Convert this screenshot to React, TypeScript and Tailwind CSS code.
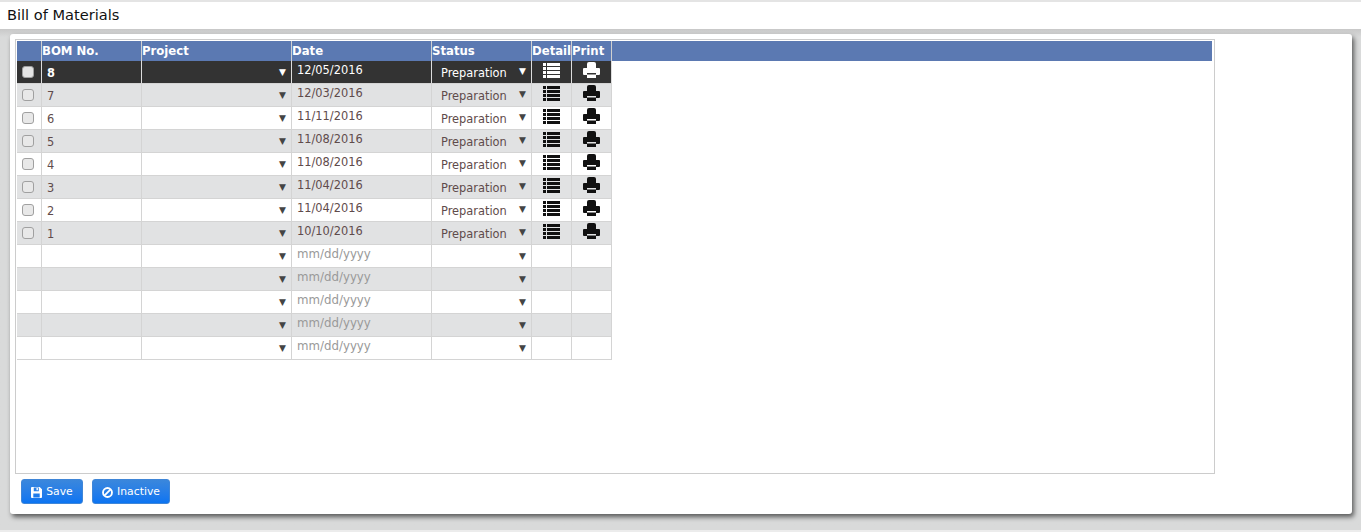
import React from 'react';

const boms = [
  { no: '8', date: '12/05/2016' },
  { no: '7', date: '12/03/2016' },
  { no: '6', date: '11/11/2016' },
  { no: '5', date: '11/08/2016' },
  { no: '4', date: '11/08/2016' },
  { no: '3', date: '11/04/2016' },
  { no: '2', date: '11/04/2016' },
  { no: '1', date: '10/10/2016' },
];

const ListIcon = () => (
  <svg width="17" height="15" viewBox="0 0 17 15" fill="currentColor">
    <path d="M0 0h3v3H0zM4 0h13v3H4zM0 4h3v3H0zM4 4h13v3H4zM0 8h3v3H0zM4 8h13v3H4zM0 12h3v3H0zM4 12h13v3H4z" />
  </svg>
);

const PrintIcon = () => (
  <svg width="17" height="16" viewBox="0 0 17 16" fill="currentColor">
    <path d="M4 6V2q0-2 2-2h5q2 0 2 2v4z" />
    <path fillRule="evenodd" d="M1 6h15q1 0 1 1v5q0 1-1 1h-3v3H4v-3H1q-1 0-1-1V7q0-1 1-1zM4 11v1.500h9V11z" />
  </svg>
);

const SaveIcon = () => (
  <svg width="11" height="11" viewBox="0 0 12 12" fill="currentColor">
    <path fillRule="evenodd" d="M1 0h8.500L12 2.500V11q0 1-1 1H1q-1 0-1-1V1q0-1 1-1zM3 0.500V4.500h5.500V0.500zM6 1h1.500v2.500H6zM2.500 7v4.500h7V7z" />
  </svg>
);

const BanIcon = () => (
  <svg width="11" height="11" viewBox="0 0 13 13" fill="none" stroke="currentColor" strokeWidth="2.200">
    <circle cx="6.500" cy="6.500" r="5.300" />
    <path d="M2.800 10.200 10.200 2.800" />
  </svg>
);

const Arrow: React.FC<{ active?: boolean; className?: string }> = ({ active, className }) => (
  <span className={`text-[9px] leading-none ${active ? 'text-white' : 'text-[#444]'} ${className ?? ''}`}>▼</span>
);

const HeaderCell: React.FC<{ className: string; label?: string }> = ({ className, label }) => (
  <div className={`${className} h-full shrink-0 border-r border-[#d0d0d0] pt-[3px] text-[11.7px] leading-[14px] font-bold text-white`}>
    {label}
  </div>
);

const Row: React.FC<{ index: number; no?: string; date?: string; active?: boolean }> = ({ index, no, date, active }) => {
  const filled = no !== undefined;
  const rowBg = active ? 'bg-[#333333]' : index % 2 === 1 ? 'bg-[#e1e2e3]' : 'bg-white';
  const text = active ? 'text-white' : 'text-[#5f4b4b]';
  const cell = `h-full shrink-0 border-r border-[#d4d4d4] flex ${active ? 'border-r-[#dddddd]' : ''}`;
  const icon = active ? 'text-white' : 'text-[#111]';

  return (
    <div className={`flex h-[23px] w-[595px] border-b border-[#d4d4d4] ${rowBg}`}>
      <div className={`${cell} w-[25px] items-center justify-center pr-[2px]`}>
        {filled && (
          <span className={`h-[12px] w-[12px] rounded-[3px] border border-[#a0a0a0] ${active ? 'bg-[#e4e4e4]' : 'bg-[#e8e8e8]'}`} />
        )}
      </div>
      <div className={`${cell} w-[100px] items-center pl-[5px] pt-[3px] text-[11.4px] ${text} ${active ? 'font-semibold' : ''}`}>{no}</div>
      <div className={`${cell} w-[150px] items-center justify-end pr-[5px]`}>
        <Arrow active={active} />
      </div>
      <div className={`${cell} w-[140px] pl-[5px] pt-[2px] leading-[14px] ${filled ? `text-[11.4px] ${text}` : 'text-[11.8px] text-[#999999]'}`}>
        {date ?? 'mm/dd/yyyy'}
      </div>
      <div className={`${cell} w-[100px] items-center justify-between pl-[9px] pr-[5px] text-[11.4px]`}>
        <span className={`pt-[3px] ${text} ${active ? 'font-medium' : ''}`}>{filled ? 'Preparation' : ''}</span>
        <Arrow active={active} className={filled ? 'mb-[2px]' : ''} />
      </div>
      <div className={`${cell} w-[40px] items-start justify-center pt-[2px] ${icon}`}>{filled && <ListIcon />}</div>
      <div className={`${cell} w-[40px] items-start justify-center pt-[1px] ${icon}`}>{filled && <PrintIcon />}</div>
    </div>
  );
};

const App: React.FC = () => {
  const button =
    'flex h-[25px] items-center justify-center gap-[4px] rounded-[3px] border border-[#3f86d8] bg-gradient-to-b from-[#3a87dc] to-[#0a74f2] pt-px text-[10.8px] text-white';

  return (
    <div className="flex h-[532px] w-[1361px] flex-col overflow-hidden bg-[#d9dada] font-['DejaVu_Sans',sans-serif]">
      <div className="h-[2px] bg-[#e4e4e4]" />
      <div className="flex h-[27px] items-center bg-white pb-[1px] pl-[7px] text-[14.6px] text-[#111]">Bill of Materials</div>

      <div className="flex-1 bg-gradient-to-b from-[#c8c8c8] to-[#d9dada] to-[8px] pl-[10px] pr-[9px] pt-[5px]">
        <div className="h-[480px] rounded-[3px] bg-white pl-[5px] pt-[5px] shadow-[2px_3px_5px_rgba(0,0,0,0.6)]">
          <div className="h-[435px] w-[1200px] border border-[#cccccc] pl-px pt-px">
            <div className="flex h-[20px] w-[1195px] bg-[#5b79b2]">
              <HeaderCell className="w-[25px]" />
              <HeaderCell className="w-[100px]" label="BOM No." />
              <HeaderCell className="w-[150px]" label="Project" />
              <HeaderCell className="w-[140px]" label="Date" />
              <HeaderCell className="w-[100px]" label="Status" />
              <HeaderCell className="w-[40px]" label="Detail" />
              <HeaderCell className="w-[40px]" label="Print" />
            </div>
            {boms.map((b, i) => (
              <Row key={b.no} index={i} no={b.no} date={b.date} active={i === 0} />
            ))}
            {[8, 9, 10, 11, 12].map((i) => (
              <Row key={i} index={i} />
            ))}
          </div>

          <div className="mt-[5px] flex gap-[9px] pl-[6px]">
            <button className={`${button} w-[62px]`}>
              <SaveIcon /> Save
            </button>
            <button className={`${button} w-[78px]`}>
              <BanIcon /> Inactive
            </button>
          </div>
        </div>
      </div>
      <div className="h-[2px] bg-[#ececec]" />
    </div>
  );
};

export default App;
